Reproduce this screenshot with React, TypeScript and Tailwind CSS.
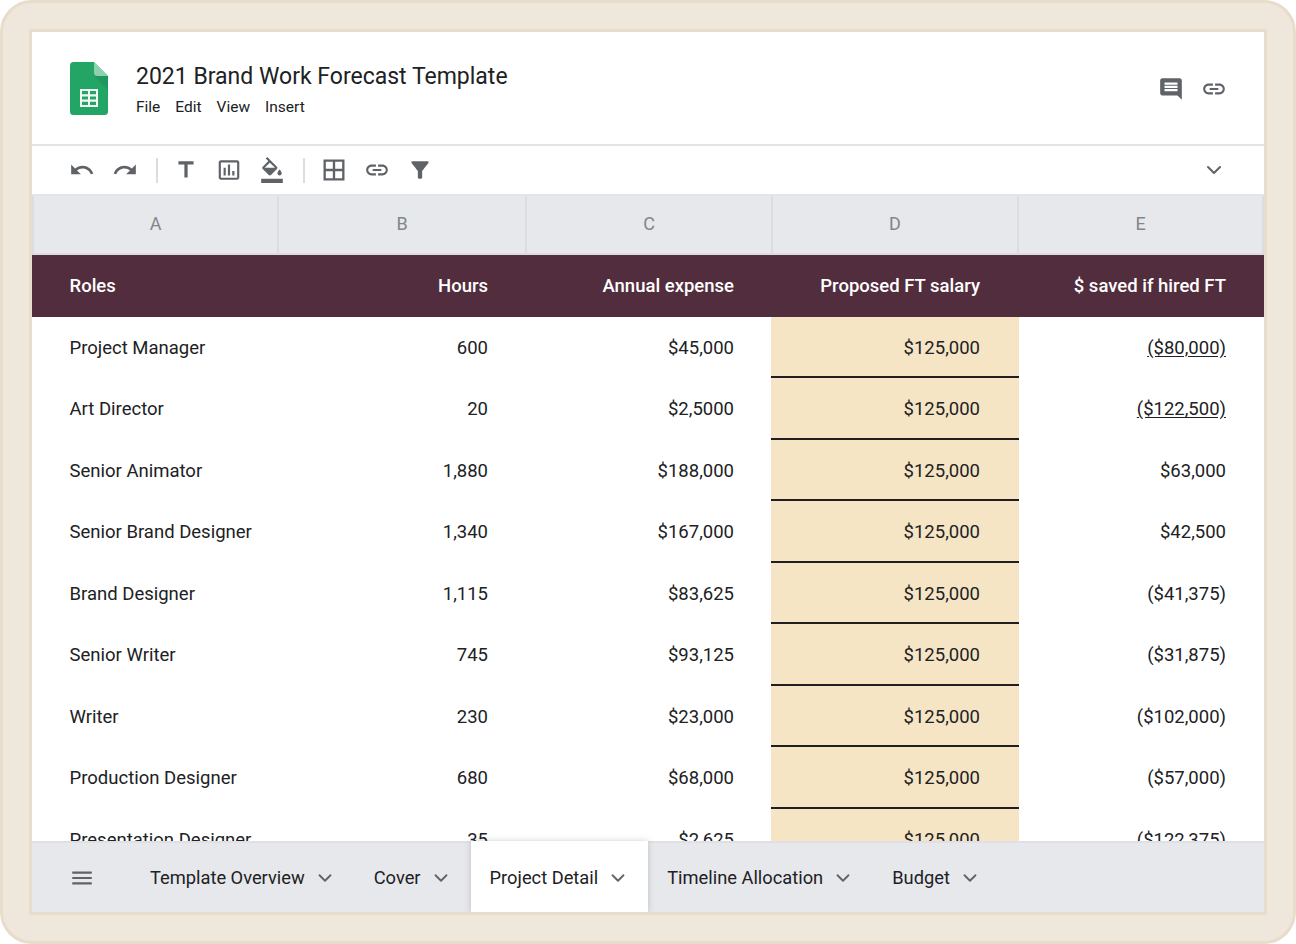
import { ChevronDown } from "lucide-react";

const rows = [
  ["Project Manager", "600", "$45,000", "$125,000", "($80,000)"],
  ["Art Director", "20", "$2,5000", "$125,000", "($122,500)"],
  ["Senior Animator", "1,880", "$188,000", "$125,000", "$63,000"],
  ["Senior Brand Designer", "1,340", "$167,000", "$125,000", "$42,500"],
  ["Brand Designer", "1,115", "$83,625", "$125,000", "($41,375)"],
  ["Senior Writer", "745", "$93,125", "$125,000", "($31,875)"],
  ["Writer", "230", "$23,000", "$125,000", "($102,000)"],
  ["Production Designer", "680", "$68,000", "$125,000", "($57,000)"],
  ["Presentation Designer", "35", "$2,625", "$125,000", "($122,375)"],
];

const columns = "grid grid-cols-[246px_248px_246px_246px_246px]";
const tabs = ["Template Overview", "Cover", "Project Detail", "Timeline Allocation", "Budget"];

function Icon({ d, className }: { d: string; className?: string }) {
  return (
    <svg viewBox="0 0 24 24" className={className ?? "w-[26px] h-[26px]"} fill="#5f6368">
      <path d={d} />
    </svg>
  );
}

const linkPath =
  "M3.9 12c0-1.71 1.39-3.1 3.1-3.1h4V7H7c-2.76 0-5 2.24-5 5s2.24 5 5 5h4v-1.9H7c-1.71 0-3.1-1.39-3.1-3.1zM8 13h8v-2H8v2zm9-6h-4v1.9h4c1.71 0 3.1 1.39 3.1 3.1s-1.39 3.1-3.1 3.1h-4V17h4c2.76 0 5-2.24 5-5s-2.24-5-5-5z";

function SheetsLogo() {
  return (
    <svg viewBox="0 0 38 53" className="w-[38px] h-[53px]">
      <path d="M3.5 0H24l14 14v35.5a3.5 3.5 0 0 1-3.5 3.5h-31A3.5 3.5 0 0 1 0 49.5v-46A3.5 3.5 0 0 1 3.5 0z" fill="#23a566" />
      <path d="M24 14l14 14V14z" fill="#1c8f57" opacity="0.55" />
      <path d="M24 0l14 14H27.5A3.5 3.5 0 0 1 24 10.500z" fill="#8ed1b1" />
      <path d="M10 27h18v18H10z M12 29v3.200h6V29z M20 29v3.200h6V29z M12 34.400v3.200h6v-3.200z M20 34.400v3.200h6v-3.200z M12 39.800V43h6v-3.200z M20 39.800V43h6v-3.200z" fill="#f1f8f4" fillRule="evenodd" />
    </svg>
  );
}

function Toolbar() {
  return (
    <div className="h-[50px] shrink-0 border-b-2 border-[#e3e4e8] flex items-center pl-[37px] pr-[37px]">
      <div className="flex items-center gap-[17px]">
        <Icon d="M12.5 8c-2.65 0-5.05.99-6.9 2.6L2 7v9h9l-3.62-3.62c1.39-1.16 3.16-1.88 5.12-1.88 3.54 0 6.55 2.31 7.6 5.5l2.37-.78C21.08 11.03 17.15 8 12.5 8z" />
        <Icon d="M18.4 10.6C16.55 8.99 14.15 8 11.5 8c-4.65 0-8.58 3.03-9.96 7.22L3.900 16c1.050-3.190 4.050-5.500 7.600-5.500 1.950 0 3.730.72 5.120 1.880L13 16h9V7l-3.600 3.600z" />
      </div>
      <div className="w-[2px] h-[25px] bg-[#dcdde1] ml-[18px] mr-[15px]" />
      <div className="flex items-center gap-[17px]">
        <Icon d="M5 4v3h5.500v12h3V7H19V4z" />
        <Icon d="M9 17H7v-7h2v7zm4 0h-2V7h2v10zm4 0h-2v-4h2v4zm2.500 2.100h-15V5h15v14.100zm0-16.100h-15c-1.100 0-2 .9-2 2v14c0 1.100.9 2 2 2h15c1.100 0 2-.9 2-2V5c0-1.100-.9-2-2-2z" />
        <Icon d="M16.560 8.940L7.620 0 6.210 1.410l2.380 2.380-5.150 5.150c-.59.59-.59 1.540 0 2.120l5.500 5.500c.29.29.68.44 1.060.44s.77-.15 1.060-.44l5.500-5.500c.59-.58.59-1.530 0-2.120zM5.210 10L10 5.210 14.790 10H5.210zM19 11.500s-2 2.170-2 3.500c0 1.100.9 2 2 2s2-.9 2-2c0-1.330-2-3.500-2-3.500zM2 20h20v4H2z" />
      </div>
      <div className="w-[2px] h-[25px] bg-[#dcdde1] ml-[18px] mr-[16px]" />
      <div className="flex items-center gap-[17px]">
        <Icon className="w-[28px] h-[28px] -mx-px" d="M3 3v18h18V3H3zm8 16H5v-6h6v6zm0-8H5V5h6v6zm8 8h-6v-6h6v6zm0-8h-6V5h6v6z" />
        <Icon d={linkPath} />
        <Icon d="M4.250 5.610C6.270 8.200 10 13 10 13v6c0 .55.45 1 1 1h2c.55 0 1-.45 1-1v-6s3.720-4.800 5.740-7.390c.51-.66.04-1.610-.79-1.610H5.040c-.83 0-1.300.95-.79 1.610z" />
      </div>
      <ChevronDown className="w-6 h-6 ml-auto mr-[1px] text-[#5f6368]" strokeWidth={2} />
    </div>
  );
}

function Sheet() {
  return (
    <div className="flex-1 min-h-0 overflow-hidden text-[18.500px]">
      <div className="grid grid-cols-[245px_248px_246px_246px_243px] h-[59px] bg-[#e7e8ec] border-l-2 border-r-2 border-b-2 border-[#dcdde1]">
        {["A", "B", "C", "D", "E"].map((letter) => (
          <div key={letter} className="flex items-center justify-center pb-[2px] text-[18px] text-[#80868b] border-r-2 border-[#dcdde1] last:border-r-0">
            {letter}
          </div>
        ))}
      </div>
      <div className={`${columns} h-[61.500px] pt-[2px] items-center bg-[#522d3d] font-medium text-white`}>
        <div className="pl-[37.500px]">Roles</div>
        <div className="pr-[38px] text-right">Hours</div>
        <div className="pr-[38px] text-right">Annual expense</div>
        <div className="pr-[38px] text-right">Proposed FT salary</div>
        <div className="pr-[38px] text-right">$ saved if hired FT</div>
      </div>
      {rows.map((row, index) => (
        <div key={row[0]} className={`${columns} h-[61.500px] items-stretch text-[#202124]`}>
          <div className="pl-[37.500px] pt-[3px] flex items-center">{row[0]}</div>
          <div className="pr-[38px] pt-[3px] flex items-center justify-end">{row[1]}</div>
          <div className="pr-[38px] pt-[3px] flex items-center justify-end">{row[2]}</div>
          <div className="pr-[39px] pt-[5px] flex items-center justify-end bg-[#f5e5c4] border-b-2 border-[#1f1f1f] -mx-px">{row[3]}</div>
          <div className="pr-[38px] pt-[3px] flex items-center justify-end">
            <span className={index < 2 ? "underline underline-offset-2" : ""}>{row[4]}</span>
          </div>
        </div>
      ))}
    </div>
  );
}

function TabBar() {
  return (
    <div className="h-[71px] shrink-0 bg-[#e7e8ec] border-t-2 border-[#dfe0e5] flex text-[18.300px] text-[#202124]">
      <div className="w-[99px] flex items-center justify-center">
        <Icon d="M3 18h18v-2H3v2zm0-5h18v-2H3v2zm0-7v2h18V6H3z" />
      </div>
      {tabs.map((tab) => {
        const active = tab === "Project Detail";
        return (
          <div
            key={tab}
            className={`flex items-center gap-[9px] pl-[19px] pr-[19px] ${active ? "bg-white -mt-[2px] pt-[2px] shadow-[0_0_6px_rgba(60,64,67,0.25)]" : ""}`}
          >
            <span>{tab}</span>
            <ChevronDown className="w-[22px] h-[22px] text-[#5f6368]" strokeWidth={2} />
          </div>
        );
      })}
    </div>
  );
}

export default function App() {
  return (
    <div className="w-[1296px] h-[944px] overflow-hidden bg-[#efe6dc] border-[3px] border-[#e8dccc] rounded-[32px] p-[26px] font-['Roboto',sans-serif]">
      <div className="h-[886px] w-[1238px] border-[3px] border-[#e8dccc] bg-white flex flex-col overflow-hidden">
        <div className="h-[114px] shrink-0 border-b-2 border-[#e3e4e8] flex items-center pl-[38px] pr-[37px]">
          <SheetsLogo />
          <div className="ml-[28px] mt-[2px]">
            <div className="text-[23px] leading-[32px] text-[#202124]">2021 Brand Work Forecast Template</div>
            <div className="flex gap-[15px] text-[15.500px] leading-[20px] text-[#202124] mt-[4px]">
              <span>File</span>
              <span>Edit</span>
              <span>View</span>
              <span>Insert</span>
            </div>
          </div>
          <div className="ml-auto mt-[2px] flex items-center gap-[17px]">
            <Icon d="M21.990 4c0-1.100-.89-2-1.990-2H4c-1.100 0-2 .9-2 2v12c0 1.100.9 2 2 2h14l4 4-.01-18zM18 14H6v-2h12v2zm0-3H6V9h12v2zm0-3H6V6h12v2z" />
            <Icon d={linkPath} />
          </div>
        </div>
        <Toolbar />
        <Sheet />
        <TabBar />
      </div>
    </div>
  );
}
